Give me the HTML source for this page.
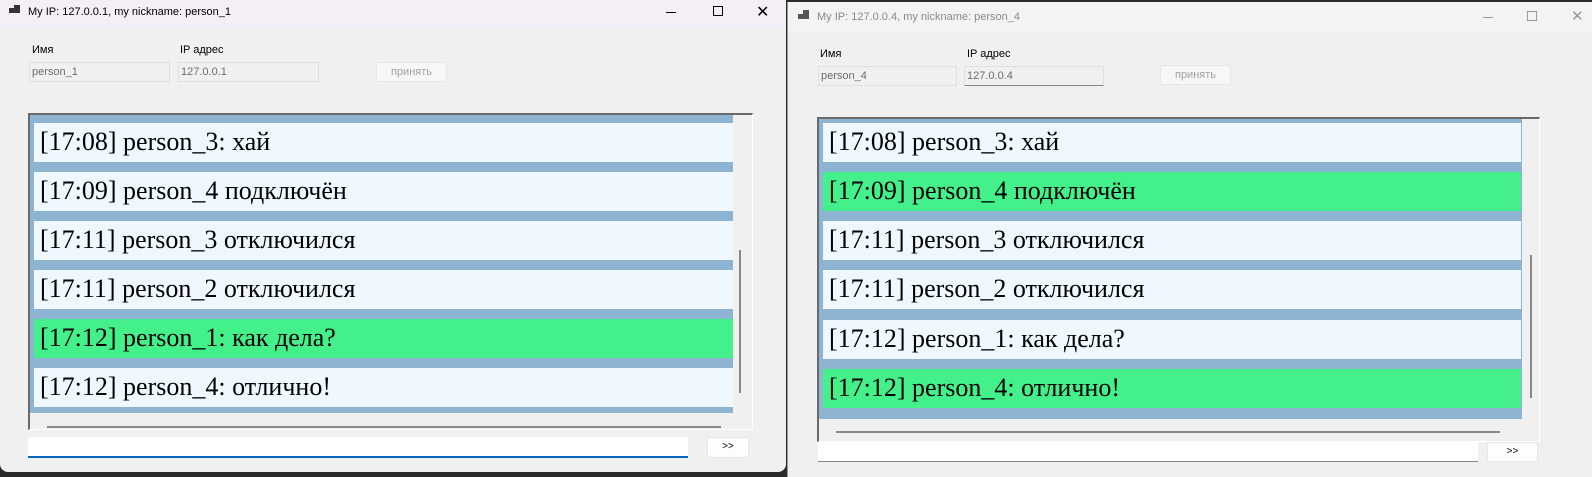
<!DOCTYPE html>
<html><head><meta charset="utf-8"><style>
*{margin:0;padding:0;box-sizing:border-box}
body{width:1592px;height:477px;position:relative;overflow:hidden;background:#2b2b2b;font-family:"Liberation Sans","DejaVu Sans",sans-serif}
.abs{position:absolute}
.win{position:absolute;background:#f0f0f0;overflow:hidden}
.lbl{position:absolute;font-size:11px;color:#000}
.inp{position:absolute;height:20px;border:1px solid #e0e0e0;background:#f0f0f0;font-size:11px;color:#6d6d6d;padding:3px 2px}
.btn{position:absolute;border:1px solid #e6e6e6;background:#f7f7f7;border-radius:3px;font-size:11px;color:#a0a0a0;text-align:center;line-height:18px}
.row{position:absolute;height:39px;background:#eef8fe;font-family:"Liberation Serif",serif;font-size:26px;line-height:38px;padding-left:6px;color:#000;white-space:nowrap;overflow:hidden}
.g{background:#44f08a}
</style></head><body>
<!-- left window -->
<div class="win" style="left:0;top:0;width:786px;height:472px;border-radius:0 0 8px 8px">
 <div class="abs" style="left:0;top:0;width:786px;height:28px;background:#f4eff7"></div>
 <div class="abs" style="left:9px;top:8px;width:5px;height:5px;background:#333"></div>
 <div class="abs" style="left:14px;top:5px;width:6px;height:8px;background:#333"></div>
 <div class="abs" style="left:28px;top:6px;font-size:11px;color:#000">My IP: 127.0.0.1, my nickname: person_1</div>
 <div class="abs" style="left:666px;top:12px;width:10px;height:1px;background:#000"></div>
 <div class="abs" style="left:713px;top:6px;width:10px;height:10px;border:1px solid #000"></div>
 <div class="abs" style="left:756px;top:2px;font-size:16px;color:#000">✕</div>
 <div class="lbl" style="left:32px;top:44px">Имя</div>
 <div class="lbl" style="left:180px;top:44px">IP адрес</div>
 <div class="inp" style="left:29px;top:62px;width:141px">person_1</div>
 <div class="inp" style="left:178px;top:62px;width:141px">127.0.0.1</div>
 <div class="btn" style="left:376px;top:62px;width:71px;height:20px">принять</div>
 <div class="abs" style="left:28px;top:113px;width:725px;height:317px;border-left:2px solid #6a6a6a;border-top:2px solid #6a6a6a;border-right:1px solid #fff;border-bottom:1px solid #fff;background:#f0f0f0"></div>
 <div class="abs" style="left:30px;top:115px;width:703px;height:298px;background:#8eb4d4"></div>
 <div class="row" style="left:34px;top:123px;width:699px">[17:08] person_3: хай</div>
 <div class="row" style="left:34px;top:172px;width:699px">[17:09] person_4 подключён</div>
 <div class="row" style="left:34px;top:221px;width:699px">[17:11] person_3 отключился</div>
 <div class="row" style="left:34px;top:270px;width:699px">[17:11] person_2 отключился</div>
 <div class="row g" style="left:34px;top:319px;width:699px">[17:12] person_1: как дела?</div>
 <div class="row" style="left:34px;top:368px;width:699px">[17:12] person_4: отлично!</div>
 <div class="abs" style="left:739px;top:250px;width:2px;height:143px;background:#888"></div>
 <div class="abs" style="left:47px;top:426px;width:674px;height:2px;background:#888"></div>
 <div class="abs" style="left:28px;top:437px;width:660px;height:21px;background:#fff;border-bottom:2px solid #0067c0"></div>
 <div class="btn" style="left:707px;top:437px;width:42px;height:21px;background:#fdfdfd;color:#000;font-size:10px">&gt;&gt;</div>
</div>
<!-- right window -->
<div class="win" style="left:787px;top:2px;width:805px;height:475px;border-left:1px solid #999">
 <div class="abs" style="left:0;top:0;width:805px;height:30px;background:#f3f3f3"></div>
 <div class="abs" style="left:10px;top:12px;width:5px;height:5px;background:#555"></div>
 <div class="abs" style="left:15px;top:8px;width:6px;height:9px;background:#555"></div>
 <div class="abs" style="left:29px;top:9px;font-size:11px;color:#8a8a8a">My IP: 127.0.0.4, my nickname: person_4</div>
 <div class="abs" style="left:695px;top:15px;width:10px;height:1px;background:#999"></div>
 <div class="abs" style="left:739px;top:9px;width:10px;height:10px;border:1px solid #999"></div>
 <div class="abs" style="left:783px;top:5px;font-size:15px;color:#999">✕</div>
 <div class="lbl" style="left:32px;top:46px">Имя</div>
 <div class="lbl" style="left:179px;top:46px">IP адрес</div>
 <div class="inp" style="left:30px;top:64px;width:139px">person_4</div>
 <div class="inp" style="left:176px;top:64px;width:140px;border-bottom:1px solid #888">127.0.0.4</div>
 <div class="btn" style="left:372px;top:63px;width:71px;height:20px">принять</div>
 <div class="abs" style="left:29px;top:115px;width:723px;height:325px;border-left:2px solid #6a6a6a;border-top:2px solid #6a6a6a;border-right:1px solid #fff;border-bottom:1px solid #fff;background:#f0f0f0"></div>
 <div class="abs" style="left:31px;top:117px;width:703px;height:300px;background:#8eb4d4"></div>
 <div class="row" style="left:35px;top:121px;width:698px">[17:08] person_3: хай</div>
 <div class="row g" style="left:35px;top:170px;width:698px">[17:09] person_4 подключён</div>
 <div class="row" style="left:35px;top:219px;width:698px">[17:11] person_3 отключился</div>
 <div class="row" style="left:35px;top:268px;width:698px">[17:11] person_2 отключился</div>
 <div class="row" style="left:35px;top:318px;width:698px">[17:12] person_1: как дела?</div>
 <div class="row g" style="left:35px;top:367px;width:698px">[17:12] person_4: отлично!</div>
 <div class="abs" style="left:742px;top:253px;width:2px;height:143px;background:#888"></div>
 <div class="abs" style="left:48px;top:429px;width:664px;height:2px;background:#888"></div>
 <div class="abs" style="left:30px;top:440px;width:660px;height:20px;background:#fff;border-bottom:1px solid #888"></div>
 <div class="btn" style="left:699px;top:440px;width:51px;height:20px;background:#fdfdfd;color:#000;font-size:10px">&gt;&gt;</div>
</div>
</body></html>
